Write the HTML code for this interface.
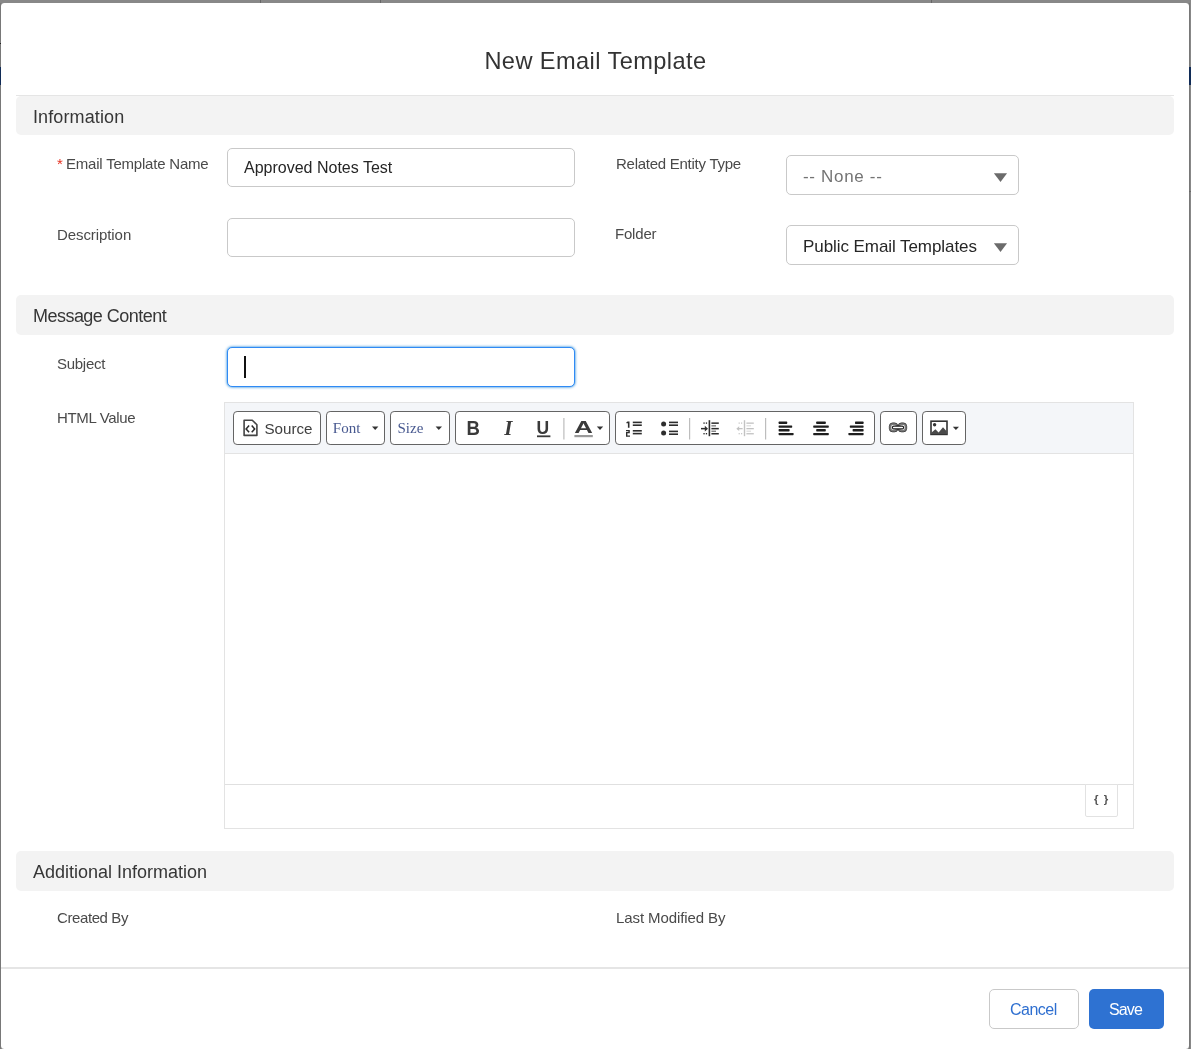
<!DOCTYPE html>
<html lang="en">
<head>
<meta charset="utf-8">
<title>New Email Template</title>
<style>
*{box-sizing:border-box;margin:0;padding:0}
html,body{width:1191px;height:1049px;overflow:hidden}
body{background:#888;font-family:"Liberation Sans",sans-serif;color:#3e3e3c;position:relative}
.abs{position:absolute}
.bd{position:absolute;background:#555}
#modal{position:absolute;left:1px;top:2.5px;width:1188px;height:1046.5px;background:#fff;border-radius:3.5px}
.t{position:absolute;white-space:nowrap;line-height:1;will-change:transform}
#title{left:0;width:1191px;text-align:center;top:50.4px;font-size:23.6px;color:#333;letter-spacing:0.42px}
.hline{position:absolute;left:16px;width:1158px;top:95px;height:1px;background:#e5e5e5}
.sec{position:absolute;left:16px;width:1158px;height:39px;background:#f3f3f3;border-radius:5px}
.sec span{will-change:transform;position:absolute;left:17px;top:11.5px;font-size:18px;line-height:1;color:#363636;white-space:nowrap}
.lbl{font-size:15px;color:#4a4a4a;margin-top:-1px}
.inp{position:absolute;left:227px;width:348px;height:39px;border:1px solid #c9c9c9;border-radius:5px;background:#fff}
.sel{position:absolute;left:786px;width:233px;height:40px;border:1px solid #c9c9c9;border-radius:5px;background:#fff}
.sel i{position:absolute;left:206.9px;top:17.3px;width:13.2px;height:8.8px;background:#6b6b6b;clip-path:polygon(0 0,100% 0,50% 100%)}
.val{font-size:16px;color:#262626}
</style>
</head>
<body>
<div class="bd" style="left:0;top:0;width:1px;height:1049px;background:#787878"></div>
<div class="bd" style="left:1189px;top:0;width:1px;height:1049px;background:#787878"></div>
<div class="bd" style="left:0;top:0;width:1191px;height:3px;background:#888"></div>
<div class="bd" style="left:0;top:43px;width:1px;height:1px;background:#222"></div>
<div class="bd" style="left:0;top:67px;width:1px;height:18px;background:#102b56"></div>
<div class="bd" style="left:1189px;top:67px;width:2px;height:18px;background:#102b56"></div>
<div class="bd" style="left:1189px;top:191px;width:2px;height:1px;background:#6a6a6a"></div>
<div class="bd" style="left:260px;top:0;width:1px;height:3px;background:#666"></div>
<div class="bd" style="left:380px;top:0;width:1px;height:3px;background:#666"></div>
<div class="bd" style="left:931px;top:0;width:1px;height:3px;background:#666"></div>
<div id="modal"></div>

<div class="t" id="title">New Email Template</div>
<div class="hline"></div>

<div class="sec" style="top:96px"><span id="s1" style="letter-spacing:0.12px">Information</span></div>
<div class="t lbl" id="l1a" style="left:56.5px;top:157.4px;color:#e6301f">*</div>
<div class="t lbl" id="l1" style="letter-spacing:-0.21px;left:66px;top:157.4px">Email Template Name</div>
<div class="inp" style="top:148px"></div>
<div class="t val" id="v1" style="left:244px;top:160px">Approved Notes Test</div>
<div class="t lbl" id="l2" style="letter-spacing:-0.26px;left:615.5px;top:157px">Related Entity Type</div>
<div class="sel" style="top:155px"><i></i></div>
<div class="t val" id="v2" style="left:803px;top:167.5px;font-size:17px;color:#747474;letter-spacing:0.68px">-- None --</div>

<div class="t lbl" id="l3" style="letter-spacing:-0.08px;left:57px;top:228px;">Description</div>
<div class="inp" style="top:218px"></div>
<div class="t lbl" id="l4" style="letter-spacing:-0.19px;left:615px;top:227px">Folder</div>
<div class="sel" style="top:225px"><i></i></div>
<div class="t val" id="v4" style="left:803px;top:237.6px;font-size:17px;letter-spacing:-0.07px">Public Email Templates</div>

<div class="sec" style="top:295px;height:40px"><span id="s2" style="letter-spacing:-0.53px">Message Content</span></div>
<div class="t lbl" id="l5" style="letter-spacing:-0.28px;left:57px;top:357px;">Subject</div>
<div class="inp" style="top:347px;height:40px;border-color:#2f8af5;box-shadow:0 0 3px #0176d3"></div>
<div class="abs" style="left:244px;top:356px;width:1.6px;height:21.5px;background:#111"></div>
<div class="t lbl" id="l6" style="letter-spacing:-0.34px;left:57px;top:411px;">HTML Value</div>

<div id="editor" class="abs" style="left:224px;top:402px;width:910px;height:427px;border:1px solid #e3e3e3;background:#fff"></div>
<div id="tb" class="abs" style="left:225px;top:403px;width:908px;height:51px;background:#f4f6f9;border-bottom:1px solid #e3e3e3"></div>

<svg class="abs" id="tbsvg" style="left:0;top:0" width="1191" height="1049" viewBox="0 0 1191 1049">
<g fill="#fff" stroke="#646464" stroke-width="1">
<rect x="233.5" y="411.5" width="87" height="33" rx="3.6"/>
<rect x="326.5" y="411.5" width="58" height="33" rx="3.6"/>
<rect x="390.5" y="411.5" width="59" height="33" rx="3.6"/>
<rect x="455.5" y="411.5" width="154" height="33" rx="3.6"/>
<rect x="615.5" y="411.5" width="259" height="33" rx="3.6"/>
<rect x="880.5" y="411.5" width="36" height="33" rx="3.6"/>
<rect x="922.5" y="411.5" width="43" height="33" rx="3.6"/>
</g>
<!-- source icon -->
<g fill="none" stroke="#444" stroke-width="1.6" stroke-linejoin="round">
<path d="M244.1 420.2h8.2l4.6 4.6v10.6h-12.8z"/>
</g>
<path d="M249.1 425.5l-3 3.4 3 3.4M251.7 425.5l3 3.4-3 3.4" fill="none" stroke="#2a2a2a" stroke-width="1.5"/>
<text x="264.4" y="434" font-family="Liberation Sans, sans-serif" font-size="15.2" fill="#404040">Source</text>
<text x="332.8" y="433" font-family="Liberation Serif, serif" font-size="15" fill="#47588f">Font</text>
<path d="M372 426.6h6.4l-3.2 3.4z" fill="#333"/>
<text x="397.5" y="433" font-family="Liberation Serif, serif" font-size="15" fill="#47588f">Size</text>
<path d="M435.6 426.6h6.4l-3.2 3.4z" fill="#333"/>
<!-- B I U A -->
<text x="466.6" y="435.3" font-family="Liberation Sans, sans-serif" font-size="20" font-weight="bold" fill="#3a3a3a" textLength="13.4" lengthAdjust="spacingAndGlyphs">B</text>
<text x="504.2" y="435.3" font-family="Liberation Serif, serif" font-size="21" font-weight="bold" font-style="italic" fill="#3a3a3a">I</text>
<text x="536.4" y="433.6" font-family="Liberation Sans, sans-serif" font-size="17.5" font-weight="bold" fill="#3a3a3a">U</text>
<rect x="537" y="435.4" width="13.4" height="1.8" fill="#3a3a3a"/>
<rect x="563.3" y="418" width="1.2" height="21.5" fill="#bdbdbd"/>
<text x="574.3" y="433.3" font-family="Liberation Sans, sans-serif" font-size="16.8" font-weight="bold" fill="#3a3a3a" textLength="18.6" lengthAdjust="spacingAndGlyphs">A</text>
<rect x="574.4" y="435" width="18.4" height="2.2" fill="#9a9a9a"/>
<path d="M596.8 426.6h6.4l-3.2 3.4z" fill="#333"/>
<!-- numbered list -->
<g fill="#2e2e2e">
<path d="M627.6 421.4h1.9v6.4h-1.6v-4.6h-1.5v-1z"/>
<path d="M626 430h3.8v3.3h-2.4v2.1h2.6v1.4h-4v-4.7h2.4v-0.8h-2.4z"/>
<rect x="632.8" y="421.6" width="9" height="1.6"/>
<rect x="632.8" y="424.4" width="9" height="1.6"/>
<rect x="632.8" y="430" width="9" height="1.6"/>
<rect x="632.8" y="432.8" width="9" height="1.6"/>
<!-- bullets -->
<circle cx="663.6" cy="423.9" r="2.5"/>
<circle cx="663.6" cy="432.9" r="2.5"/>
<rect x="669" y="421.6" width="9" height="1.6"/>
<rect x="669" y="424.4" width="9" height="1.6"/>
<rect x="669" y="430.6" width="9" height="1.6"/>
<rect x="669" y="433.4" width="9" height="1.6"/>
</g>
<rect x="689" y="418" width="1.2" height="21.5" fill="#bdbdbd"/>
<!-- indent -->
<g fill="#2e2e2e">
<rect x="708.6" y="420.2" width="1.6" height="16"/>
<rect x="701" y="427.9" width="5" height="1.5"/>
<path d="M704.8 425.8l3.2 2.85-3.2 2.85z"/>
<rect x="703.4" y="422.4" width="1.3" height="1.4"/><rect x="705.8" y="422.4" width="1.3" height="1.4"/>
<rect x="703.4" y="433" width="1.3" height="1.4"/><rect x="705.8" y="433" width="1.3" height="1.4"/>
<rect x="711.4" y="422.4" width="7.4" height="1.5"/>
<rect x="711.4" y="427.9" width="7.4" height="1.5"/>
<rect x="711.4" y="433" width="7.4" height="1.5"/>
<rect x="711.4" y="425.2" width="4.6" height="1.3" fill="#777"/>
<rect x="711.4" y="430.6" width="4.6" height="1.3" fill="#777"/>
</g>
<!-- outdent disabled -->
<g fill="#c2c2c2">
<rect x="743.8" y="420.2" width="1.4" height="16"/>
<rect x="737.6" y="428" width="5" height="1.3"/>
<path d="M739.2 426.2l-2.9 2.45 2.9 2.45z"/>
<rect x="738.6" y="422.5" width="1.2" height="1.2"/><rect x="741" y="422.5" width="1.2" height="1.2"/>
<rect x="738.6" y="433.1" width="1.2" height="1.2"/><rect x="741" y="433.1" width="1.2" height="1.2"/>
<rect x="746.4" y="422.5" width="7.4" height="1.3"/>
<rect x="746.4" y="428" width="7.4" height="1.3"/>
<rect x="746.4" y="433.1" width="7.4" height="1.3"/>
<rect x="746.4" y="425.2" width="4.6" height="1.2" fill="#ddd"/>
<rect x="746.4" y="430.6" width="4.6" height="1.2" fill="#ddd"/>
</g>
<rect x="765" y="418" width="1.2" height="21.5" fill="#bdbdbd"/>
<!-- align -->
<g fill="#1e1e1e">
<rect x="778.6" y="421.6" width="8.6" height="2.3" rx="0.6"/>
<rect x="778.6" y="425.4" width="13.6" height="2.3" rx="0.6"/>
<rect x="778.6" y="429.1" width="11" height="2.3" rx="0.6"/>
<rect x="778.6" y="432.9" width="15" height="2.3" rx="0.6"/>
<rect x="816.2" y="421.6" width="9.6" height="2.3" rx="0.6"/>
<rect x="813.2" y="425.4" width="15.6" height="2.3" rx="0.6"/>
<rect x="816.2" y="429.1" width="9.6" height="2.3" rx="0.6"/>
<rect x="813.2" y="432.9" width="15.6" height="2.3" rx="0.6"/>
<rect x="855" y="421.6" width="8.6" height="2.3" rx="0.6"/>
<rect x="849.8" y="425.4" width="13.8" height="2.3" rx="0.6"/>
<rect x="852.6" y="429.1" width="11" height="2.3" rx="0.6"/>
<rect x="848.4" y="432.9" width="15.2" height="2.3" rx="0.6"/>
</g>
<!-- link -->
<g fill="none" stroke="#7a7a7a" stroke-width="2.2">
<rect x="890.3" y="423.9" width="6.6" height="7" rx="2.5"/>
<rect x="899.1" y="423.9" width="6.6" height="7" rx="2.5"/>
</g>
<g fill="none" stroke="#2e2e2e" stroke-width="0.7">
<rect x="889.3" y="422.9" width="8.6" height="9" rx="3.4"/>
<rect x="898.1" y="422.9" width="8.6" height="9" rx="3.4"/>
</g>
<rect x="892.4" y="426.1" width="11.2" height="2.8" rx="1.4" fill="#fff" stroke="#1a1a1a" stroke-width="1.1"/>
<!-- image -->
<rect x="931" y="421.2" width="16" height="13.2" fill="#fff" stroke="#333" stroke-width="1.6"/>
<path d="M931.6 434v-1.4l3.8-3.4 3.2 3.2 4.4-5.2 3.6 4v2.8z" fill="#4a4a4a"/>
<circle cx="934.6" cy="424.7" r="1.7" fill="#333"/>
<path d="M952.8 426.8h6.2l-3.1 3.2z" fill="#333"/>
</svg>
<div class="abs" style="left:225px;top:784px;width:908px;height:1px;background:#e0e0e0"></div>
<div class="abs" id="merge" style="left:1085px;top:784px;width:33px;height:33px;border:1px solid #e2e2e2;border-radius:0 0 2px 2px;background:#fff"></div>
<div class="t" id="mtxt" style="left:1094px;top:794px;font-size:11.5px;font-weight:bold;color:#555;letter-spacing:1px">{ }</div>

<div class="sec" style="top:851px;height:40px"><span id="s3">Additional Information</span></div>
<div class="t lbl" id="l7" style="letter-spacing:-0.40px;left:57px;top:911.2px;">Created By</div>
<div class="t lbl" id="l8" style="letter-spacing:-0.09px;left:615.5px;top:911.2px;">Last Modified By</div>

<div class="abs" style="left:1px;top:967px;width:1188px;height:2px;background:#e5e5e5"></div>
<div class="abs" id="cancel" style="left:989px;top:989px;width:90px;height:40px;border:1px solid #c9c9c9;border-radius:5px;background:#fff"></div>
<div class="t" id="ctxt" style="left:1010px;top:1002.4px;font-size:16px;letter-spacing:-0.5px;color:#2e6fd0">Cancel</div>
<div class="abs" id="save" style="left:1089px;top:989px;width:75px;height:40px;border-radius:5px;background:#2e72d2"></div>
<div class="t" id="stxt" style="left:1109.4px;top:1002.4px;font-size:16px;letter-spacing:-0.85px;color:#fff">Save</div>
</body>
</html>
